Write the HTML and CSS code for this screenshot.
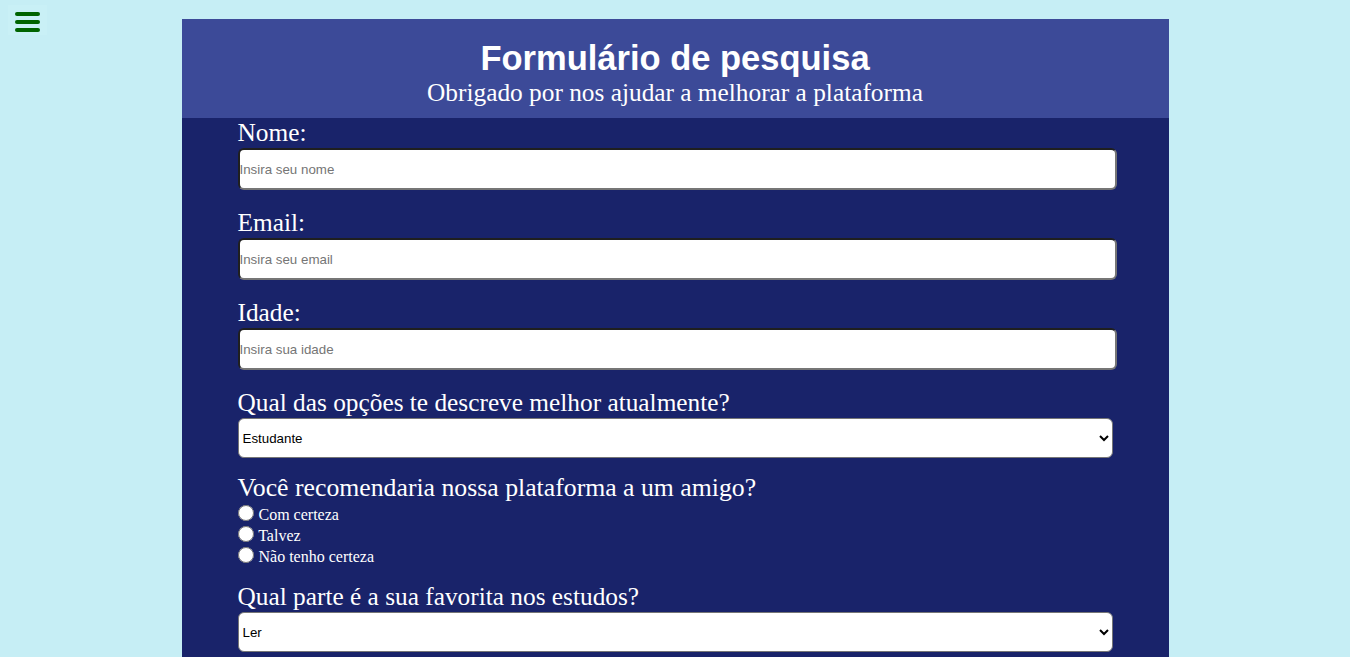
FILE: index.html
```html
<!DOCTYPE html>
<html lang="pt-BR">
<head>
<meta charset="utf-8">
<title>Formulário de pesquisa</title>
<link rel="stylesheet" href="styles.css">
</head>
<body>
<button class="menu-btn" aria-label="Menu">
  <span class="bar"></span>
  <span class="bar"></span>
  <span class="bar"></span>
</button>
<main class="survey">
  <header class="survey-header">
    <h1 class="title">Formulário de pesquisa</h1>
    <p class="subtitle">Obrigado por nos ajudar a melhorar a plataforma</p>
  </header>
  <form class="survey-form">
    <div class="field">
      <label class="field-label" for="name">Nome:</label>
      <input class="text-input" id="name" type="text" placeholder="Insira seu nome">
    </div>
    <div class="field">
      <label class="field-label" for="email">Email:</label>
      <input class="text-input" id="email" type="email" placeholder="Insira seu email">
    </div>
    <div class="field">
      <label class="field-label" for="age">Idade:</label>
      <input class="text-input" id="age" type="number" placeholder="Insira sua idade">
    </div>
    <div class="field field-select">
      <label class="field-label" for="role">Qual das opções te descreve melhor atualmente?</label>
      <select class="select-input" id="role">
        <option>Estudante</option>
        <option>Trabalhador</option>
        <option>Outro</option>
      </select>
    </div>
    <div class="field field-radio">
      <p class="field-label radio-title">Você recomendaria nossa plataforma a um amigo?</p>
      <label class="radio-row"><input class="radio" type="radio" name="rec"> Com certeza</label>
      <label class="radio-row"><input class="radio" type="radio" name="rec"> Talvez</label>
      <label class="radio-row"><input class="radio" type="radio" name="rec"> Não tenho certeza</label>
    </div>
    <div class="field field-last">
      <label class="field-label" for="fav">Qual parte é a sua favorita nos estudos?</label>
      <select class="select-input" id="fav">
        <option>Ler</option>
        <option>Escrever</option>
        <option>Praticar</option>
      </select>
    </div>
  </form>
</main>
</body>
</html>
```

FILE: styles.css
```css
html, body {
  margin: 0;
  padding: 0;
}

body {
  background: #c6eef5;
  font-family: "Liberation Serif", "Times New Roman", serif;
  color: #ffffff;
}

.menu-btn {
  position: fixed;
  top: 5px;
  left: 8px;
  width: 39px;
  height: 30px;
  padding: 7px 7px 0 7px;
  border: none;
  background: #c9f0f6;
  display: flex;
  flex-direction: column;
  gap: 4px;
  box-sizing: border-box;
  cursor: pointer;
}

.bar {
  display: block;
  width: 25px;
  height: 4px;
  border-radius: 2px;
  background: #006400;
}

.survey {
  width: 987px;
  margin: 19px auto 0 auto;
  background: #19236a;
  padding-bottom: 5px;
}

.survey-header {
  background: #3c4a98;
  padding: 19px 0 12px 0;
  text-align: center;
}

.title {
  margin: 0;
  font-family: "Liberation Sans", Arial, sans-serif;
  font-weight: bold;
  font-size: 34.5px;
  line-height: 40px;
}

.subtitle {
  margin: 0;
  font-size: 19pt;
  line-height: 28px;
}

.survey-form {
  width: 875px;
  margin: 0 auto;
}

.field {
  margin-bottom: 18px;
}

.field-select {
  margin-bottom: 15px;
}

.field-radio {
  margin-bottom: 15px;
}

.field-last {
  margin-bottom: 0;
}

.field-label {
  display: block;
  margin: 0 0 1px 0;
  font-size: 19pt;
  line-height: 29px;
}

.radio-title {
  margin-bottom: 2px;
  font-size: 25.75px;
}

.text-input {
  display: block;
  width: 875px;
  height: 38px;
  padding: 0;
  margin: 0;
  border: 2px solid;
  border-color: #1f1f1f #767676 #767676 #1f1f1f;
  border-radius: 6px;
  background: #ffffff;
  font-family: "Liberation Sans", Arial, sans-serif;
  font-size: 13.33px;
}

.text-input::placeholder {
  color: #757575;
}

.select-input {
  display: block;
  width: 100%;
  height: 40px;
  margin: 0;
  border-radius: 6px;
  background: #ffffff;
  color: #000000;
  font-family: "Liberation Sans", Arial, sans-serif;
  font-size: 13.33px;
}

.radio-row {
  display: block;
  font-size: 16px;
  line-height: 21px;
}

.radio {
  width: 16px;
  height: 16px;
  margin: 0 1px 0 0;
  vertical-align: -1px;
}
```
